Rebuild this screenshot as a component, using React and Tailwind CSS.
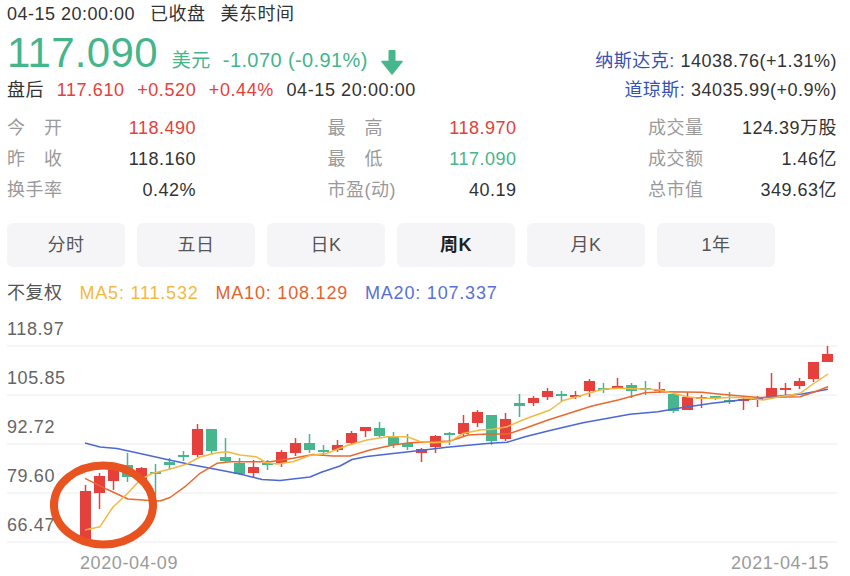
import React from "react";

const RED = "#e5403b";
const GREEN = "#47b68e";

// [bodyTop, bodyBottom, high, low, color] in page coordinates
const candles = [
  [491, 542, 485, 542, "r"],
  [476, 493, 473, 509, "r"],
  [470, 481, 468, 490, "r"],
  [465, 477, 453, 482, "g"],
  [468, 480, 467, 482, "r"],
  [472, 474, 464, 497, "g"],
  [462, 465, 458, 470, "g"],
  [455, 457, 451, 461, "g"],
  [429, 455, 424, 457, "r"],
  [429, 451, 429, 454, "g"],
  [457, 461, 438, 463, "g"],
  [463, 474, 458, 475, "g"],
  [467, 473, 460, 477, "r"],
  [463, 465, 460, 470, "g"],
  [452, 463, 450, 467, "r"],
  [443, 453, 438, 456, "r"],
  [443, 450, 434, 453, "g"],
  [450, 452, 445, 456, "g"],
  [445, 450, 440, 452, "r"],
  [433, 443, 431, 445, "r"],
  [427, 431, 427, 437, "r"],
  [428, 436, 422, 438, "g"],
  [437, 445, 432, 448, "g"],
  [443, 447, 434, 450, "g"],
  [449, 453, 448, 462, "r"],
  [436, 447, 435, 453, "r"],
  [433, 435, 432, 445, "g"],
  [423, 434, 415, 437, "r"],
  [412, 423, 410, 427, "r"],
  [415, 441, 415, 445, "g"],
  [419, 439, 413, 441, "r"],
  [403, 406, 394, 417, "g"],
  [398, 403, 396, 406, "r"],
  [391, 397, 388, 400, "r"],
  [394, 396, 391, 402, "g"],
  [395, 397, 391, 399, "r"],
  [381, 391, 379, 397, "r"],
  [388, 390, 383, 393, "g"],
  [386, 388, 378, 389, "r"],
  [385, 391, 383, 398, "g"],
  [388, 390, 381, 395, "g"],
  [389, 391, 382, 393, "r"],
  [394, 411, 394, 413, "g"],
  [397, 410, 392, 410, "r"],
  [397, 398.5, 395, 408, "r"],
  [396, 398, 396, 400, "g"],
  [400, 402, 392, 404, "g"],
  [399, 401, 396, 410, "r"],
  [398, 400, 396, 407, "r"],
  [388, 398, 373, 398, "r"],
  [388, 389.5, 383, 395, "r"],
  [381, 386, 378, 389, "r"],
  [362, 379, 362, 382, "r"],
  [354, 362, 346, 362, "r"],
];

const ma20 = [
  [85, 443], [100, 447], [117, 448.5], [140, 453.5], [167, 459.5], [193, 465], [217, 469.5],
  [240, 474], [262, 479.5], [280, 480.5], [310, 477], [322, 472], [340, 466], [352, 459.5],
  [367, 456.5], [393, 453.5], [420, 450.5], [447, 447.3], [460, 446], [490, 443.3],
  [507, 442.3], [525, 436.7], [550, 430.5], [583, 422.7], [630, 414.3], [658, 411.7],
  [678, 408.3], [712, 403.3], [745, 399.5], [785, 395.5], [802, 394], [828, 389.3],
];

const ma10 = [
  [85, 478.3], [107, 489.3], [128, 499], [150, 500.5], [160, 501], [170, 497.5], [185, 486.7],
  [200, 473.3], [217, 463.3], [230, 461.7], [270, 461.7], [293, 458.3], [313, 454.5],
  [333, 456], [350, 456], [370, 450], [393, 445], [410, 442.7], [433, 441.7], [450, 441],
  [468, 435], [488, 434], [508, 434], [525, 428.3], [548, 420], [592, 406], [618, 400],
  [645, 392.7], [665, 391.7], [702, 392.3], [718, 394], [758, 397.5], [800, 396.7],
  [815, 391.7], [828, 386.7],
];

const ma5 = [
  [85, 530], [100, 526.7], [113, 507], [127, 494], [140, 480], [152, 473.5], [172, 468.5],
  [187, 464], [200, 457], [217, 452.7], [227, 451.7], [240, 455], [256, 456.7], [266, 462.5],
  [277, 464], [293, 461.7], [310, 455.5], [327, 453.3], [347, 445.5], [367, 440], [387, 436.7],
  [407, 436.7], [420, 441.5], [433, 442.7], [450, 441.7], [463, 433.5], [480, 430],
  [493, 429.3], [507, 426.7], [527, 418.3], [550, 410], [563, 400.5], [577, 396.7],
  [590, 392.7], [603, 389.3], [617, 388.3], [650, 389.3], [660, 390], [673, 393.3],
  [687, 396.7], [700, 398.3], [717, 398.3], [733, 397.3], [750, 398.3], [763, 400],
  [780, 396.7], [800, 393.3], [813, 384], [828, 374],
];

const pts = (a) => a.map((p) => p.join(",")).join(" ");

function DownArrow() {
  return (
    <svg width="22" height="25" viewBox="0 0 22 25" className="mb-[-3px]">
      <rect x="7.5" y="0" width="7" height="13" rx="1" fill={GREEN} />
      <path d="M1 11.5 L21 11.5 L11 24 Z" fill={GREEN} strokeLinejoin="round" stroke={GREEN} strokeWidth="1.5" />
    </svg>
  );
}

function Stat({ label, value, color }) {
  return (
    <div className="w-[189px] h-[31px] flex items-center justify-between">
      <span className="text-[#9a9a9a]">{label}</span>
      <span style={color ? { color } : undefined}>{value}</span>
    </div>
  );
}

function Chart() {
  const gridYs = [346, 395, 444, 493, 542];
  const labels = ["118.97", "105.85", "92.72", "79.60", "66.47"];
  return (
    <svg width="850" height="266" viewBox="0 0 850 266" className="block">
      <g transform="translate(0,-310)">
        {gridYs.map((y) => (
          <line key={y} x1="7" x2="837" y1={y} y2={y} stroke="#ececf0" strokeWidth="1" />
        ))}
        {labels.map((t, i) => (
          <text
            key={t}
            x="7"
            y={gridYs[i] - 11}
            fontSize="18"
            letterSpacing="0.6"
            fill="#666666"
            fontFamily="Liberation Sans, sans-serif"
          >
            {t}
          </text>
        ))}
        {candles.map((c, i) => {
          const x = 85.5 + i * 14;
          const col = c[4] === "r" ? RED : GREEN;
          const h = Math.max(c[1] - c[0], 2);
          return (
            <g key={i}>
              <line x1={x} x2={x} y1={c[2]} y2={c[3]} stroke={col} strokeWidth="1.5" />
              <rect x={x - 5.5} y={c[0]} width="11" height={h} fill={col} />
            </g>
          );
        })}
        <polyline points={pts(ma20)} fill="none" stroke="#4b68d6" strokeWidth="1.6" strokeLinejoin="round" />
        <polyline points={pts(ma10)} fill="none" stroke="#e9692f" strokeWidth="1.5" strokeLinejoin="round" />
        <polyline points={pts(ma5)} fill="none" stroke="#f5b841" strokeWidth="1.5" strokeLinejoin="round" />
        <ellipse cx="103.5" cy="505" rx="49.5" ry="39.5" fill="none" stroke="#e9531f" strokeWidth="8" />
        <text x="80" y="569" fontSize="18" letterSpacing="0.6" fill="#9a9a9a" fontFamily="Liberation Sans, sans-serif">
          2020-04-09
        </text>
        <text x="829" y="569" fontSize="18" letterSpacing="0.6" textAnchor="end" fill="#9a9a9a" fontFamily="Liberation Sans, sans-serif">
          2021-04-15
        </text>
      </g>
    </svg>
  );
}

export default function App() {
  const tabs = ["分时", "五日", "日K", "周K", "月K", "1年"];
  return (
    <div className="w-[850px] h-[576px] bg-white overflow-hidden font-['Liberation_Sans','Noto_Sans_CJK_SC',sans-serif] text-[#333] text-[18px] tracking-[0.5px] leading-none">
      <div className="pl-[7px] pr-[13px]">
        <div className="h-[28px] flex items-center gap-[15px]">
          <span>04-15 20:00:00</span>
          <span>已收盘</span>
          <span>美东时间</span>
        </div>
        <div className="h-[46px] pt-[4px] flex items-baseline justify-between">
          <div className="flex items-baseline">
            <span className="text-[42px] tracking-[0.3px] text-[#45b58a]">117.090</span>
            <span className="ml-[14px] text-[19px] text-[#45b58a]">美元</span>
            <span className="ml-[12px] text-[20px] tracking-[0.4px] text-[#45b58a]">-1.070 (-0.91%)</span>
            <span className="ml-[13px] self-end mb-[2px]">
              <DownArrow />
            </span>
          </div>
          <div>
            <span className="text-[#3653b3]">纳斯达克:</span>
            <span> 14038.76(+1.31%)</span>
          </div>
        </div>
        <div className="h-[32px] flex items-center justify-between">
          <div className="flex items-center gap-[12.5px] tracking-[0.6px]">
            <span>盘后</span>
            <span className="text-[#e5403b]">117.610</span>
            <span className="text-[#e5403b]">+0.520</span>
            <span className="text-[#e5403b]">+0.44%</span>
            <span>04-15 20:00:00</span>
          </div>
          <div>
            <span className="text-[#3653b3]">道琼斯:</span>
            <span> 34035.99(+0.9%)</span>
          </div>
        </div>
        <div className="mt-[6px] flex justify-between">
          <div>
            <Stat label="今　开" value="118.490" color="#e5403b" />
            <Stat label="昨　收" value="118.160" />
            <Stat label="换手率" value="0.42%" />
          </div>
          <div>
            <Stat label="最　高" value="118.970" color="#e5403b" />
            <Stat label="最　低" value="117.090" color="#45b58a" />
            <Stat label="市盈(动)" value="40.19" />
          </div>
          <div>
            <Stat label="成交量" value="124.39万股" />
            <Stat label="成交额" value="1.46亿" />
            <Stat label="总市值" value="349.63亿" />
          </div>
        </div>
        <div className="mt-[18px] flex gap-[12px]">
          {tabs.map((t) => (
            <div
              key={t}
              className={
                t === "周K"
                  ? "w-[118px] h-[44px] rounded-[6px] bg-[#f5f5f7] flex items-center justify-center font-bold text-[#1f1f1f]"
                  : "w-[118px] h-[44px] rounded-[6px] bg-[#f5f5f7] flex items-center justify-center text-[#555]"
              }
            >
              {t}
            </div>
          ))}
        </div>
        <div className="mt-[14px] h-[24px] flex items-center gap-[17px] tracking-[0.8px]">
          <span className="text-[#555] tracking-[0.5px]">不复权</span>
          <span className="text-[#f5b940]">MA5: 111.532</span>
          <span className="text-[#e8622b]">MA10: 108.129</span>
          <span className="text-[#5870d8]">MA20: 107.337</span>
        </div>
      </div>
      <div className="mt-[5px]">
        <Chart />
      </div>
    </div>
  );
}
